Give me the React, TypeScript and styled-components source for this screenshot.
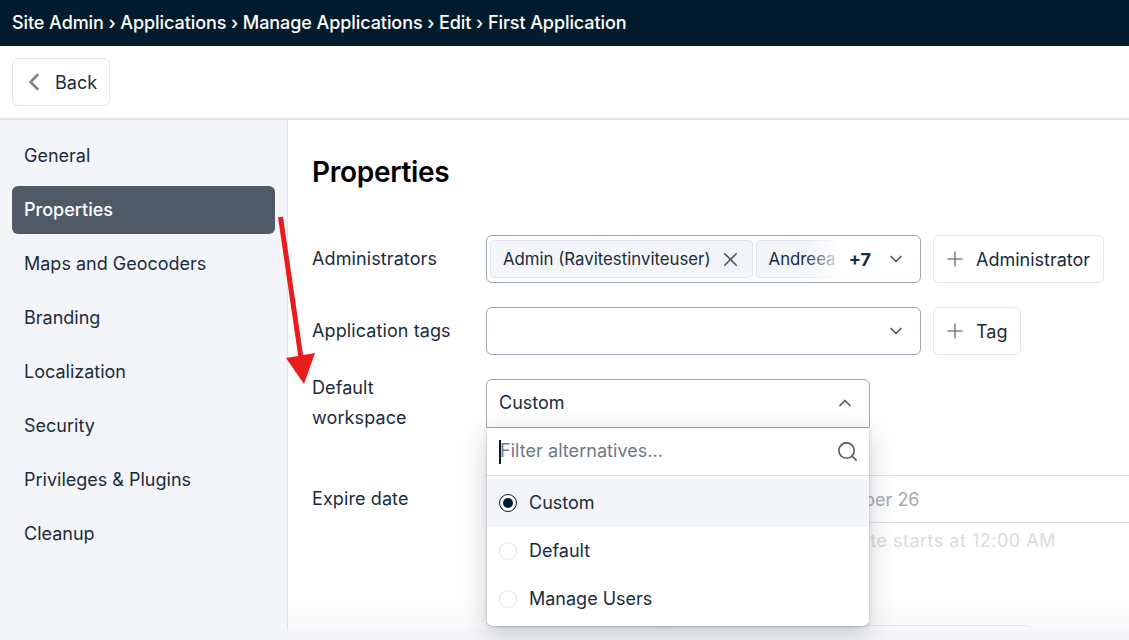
import React from "react";
import styled, { createGlobalStyle } from "styled-components";
import { ChevronLeft, ChevronDown, ChevronUp, Plus, X, Search } from "lucide-react";

const Global = createGlobalStyle`
  html, body { margin: 0; padding: 0; height: 100%; overflow: hidden; background: #fff; }
  #root { height: 100%; }
  * { box-sizing: border-box; }
`;

const Page = styled.div`
  position: relative;
  width: 1129px;
  height: 640px;
  overflow: hidden;
  display: flex;
  flex-direction: column;
  font-family: Inter, "Liberation Sans", sans-serif;
  font-size: 18px;
  color: #1a2b3c;
  background: #fff;
`;

const Crumbs = styled.header`
  height: 46px;
  flex: none;
  background: #031c2d;
  color: #fff;
  display: flex;
  align-items: center;
  padding: 0 12px 1px;
  font-weight: 500;
  font-size: 18px;
  letter-spacing: -0.08px;
`;

const Toolbar = styled.div`
  height: 74px;
  flex: none;
  padding: 12px;
  border-bottom: 2px solid #e1e4ef;
`;

const OutlineButton = styled.button`
  height: 48px;
  display: inline-flex;
  align-items: center;
  background: #fff;
  border: 1px solid #e4e6ec;
  border-radius: 6px;
  font: inherit;
  color: inherit;
  flex: none;
  svg { color: #7b858f; flex: none; }
`;

const BackButton = styled(OutlineButton)`
  padding: 0 12px 0 7px;
  gap: 7px;
`;

const Body = styled.div`
  flex: 1;
  min-height: 0;
  display: flex;
`;

const Sidebar = styled.nav`
  width: 288px;
  flex: none;
  background: #f4f5f8;
  border-right: 1px solid #e1e4ef;
  padding: 12px 12px 0;
  display: flex;
  flex-direction: column;
  gap: 6px;
`;

const NavItem = styled.div<{ $active?: boolean }>`
  height: 48px;
  width: 263px;
  flex: none;
  display: flex;
  align-items: center;
  padding: 0 12px 2px;
  border-radius: 6px;
  background: ${(p) => (p.$active ? "#4f5a68" : "transparent")};
  color: ${(p) => (p.$active ? "#fff" : "#1a2b3c")};
  font-weight: ${(p) => (p.$active ? 500 : 400)};
`;

const Main = styled.main`
  flex: 1;
  min-width: 0;
  padding: 0 0 0 24px;
`;

const Title = styled.h1`
  margin: 0;
  padding-top: 35px;
  height: 115px;
  font-size: 28px;
  line-height: 34px;
  font-weight: 600;
  letter-spacing: -0.3px;
  color: #000;
`;

const Row = styled.div<{ $gapBelow?: number }>`
  display: flex;
  align-items: center;
  height: 48px;
  margin-bottom: ${(p) => p.$gapBelow ?? 24}px;
`;

const Label = styled.div`
  width: 174px;
  flex: none;
  line-height: 30px;
  letter-spacing: 0.1px;
`;

const Field = styled.div`
  width: 435px;
  height: 48px;
  flex: none;
  display: flex;
  align-items: center;
  border: 1px solid #a0a8b5;
  border-radius: 6px;
  background: #fff;
  padding: 0 14px 0 3px;
  overflow: hidden;
  svg { color: #4f5a68; flex: none; }
`;

const Chips = styled.div`
  position: relative;
  flex: 1;
  min-width: 0;
  height: 38px;
  display: flex;
  gap: 3px;
  overflow: hidden;
`;

const Chip = styled.div`
  flex: none;
  height: 38px;
  display: flex;
  align-items: center;
  padding: 0 10px 0 12px;
  gap: 8px;
  background: #f4f5f8;
  border: 1px solid #e1e4ef;
  border-radius: 4px;
  white-space: nowrap;
  font-size: 16.8px;
  svg { color: #4f5a68; }
`;

const Fade = styled.div`
  position: absolute;
  right: 0;
  top: 0;
  bottom: 0;
  width: 42px;
  background: linear-gradient(to right, rgba(255, 255, 255, 0), #fff 90%);
`;

const More = styled.span`
  font-weight: 700;
  flex: none;
  color: #1a2b3c;
  margin: 0 15px 0 2px;
`;

const Spacer = styled.div`
  flex: 1;
`;

const AddButton = styled(OutlineButton)`
  margin-left: 12px;
  padding: 0 13px 0 9px;
  gap: 9px;
`;

const Select = styled.div`
  position: relative;
  width: 384px;
  height: 48px;
  flex: none;
`;

const SelectHead = styled.div`
  height: 49px;
  display: flex;
  align-items: center;
  justify-content: space-between;
  padding: 0 14px 2px 12px;
  border: 1px solid #a0a8b5;
  border-radius: 6px 6px 0 0;
  background: #fff;
  svg { color: #4f5a68; }
`;

const Menu = styled.div`
  position: absolute;
  z-index: 3;
  top: 49px;
  left: 1px;
  width: 382px;
  height: 198px;
  background: #fff;
  border-radius: 0 0 6px 6px;
  box-shadow: 0 1px 3px rgba(60, 70, 85, 0.35), 0 8px 28px rgba(30, 40, 55, 0.22);
`;

const FilterRow = styled.div`
  height: 48px;
  display: flex;
  align-items: center;
  justify-content: space-between;
  padding: 0 10px 0 12px;
  border-bottom: 1px solid #e1e4ef;
  svg { color: #4f5a68; flex: none; }
`;

const Filter = styled.span`
  border-left: 2px solid #031c2d;
  color: #6f7883;
  height: 24px;
  line-height: 21px;
  letter-spacing: 0.05px;
  text-indent: -1px;
`;

const Options = styled.div`
  padding-top: 3px;
`;

const Option = styled.div<{ $selected?: boolean }>`
  height: 48px;
  display: flex;
  align-items: center;
  gap: 12px;
  padding: 0 12px;
  background: ${(p) => (p.$selected ? "#f4f5f8" : "#fff")};
`;

const OptionText = styled.span`
  margin-top: -2px;
`;

const Radio = styled.span<{ $on?: boolean }>`
  width: 18px;
  height: 18px;
  flex: none;
  border-radius: 50%;
  background: #fff;
  border: ${(p) => (p.$on ? "1.5px solid #031c2d" : "1px solid #e1e4ef")};
  display: flex;
  align-items: center;
  justify-content: center;
  &::after {
    content: "";
    display: ${(p) => (p.$on ? "block" : "none")};
    width: 10px;
    height: 10px;
    border-radius: 50%;
    background: #031c2d;
  }
`;

const DateColumn = styled.div`
  width: 700px;
  flex: none;
`;

const DateInput = styled.div`
  height: 48px;
  border-top: 1px solid #dfe1e8;
  border-bottom: 1px solid #dfe1e8;
  display: flex;
  align-items: center;
  padding-left: 313px;
  color: #a5abb3;
`;

const Hint = styled.div`
  padding: 6px 0 0 283px;
  color: #d9dbde;
  line-height: 24px;
  white-space: nowrap;
  letter-spacing: 0.5px;
`;

const DateRow = styled.div`
  display: flex;
  align-items: flex-start;
  height: 48px;
  margin-top: 48px;
`;

const DateLabel = styled(Label)`
  padding-top: 9px;
`;

const Peek = styled.div`
  position: absolute;
  left: 662px;
  top: 625px;
  width: 371px;
  height: 30px;
  border: 1px solid #d5d8df;
  border-radius: 6px;
  background: #fff;
  z-index: 1;
`;

const BottomFade = styled.div`
  position: absolute;
  left: 288px;
  right: 0;
  top: 600px;
  height: 30px;
  background: linear-gradient(to bottom, rgba(244, 245, 248, 0), rgba(244, 245, 248, 0.65));
  z-index: 1;
`;

const BottomBar = styled.div`
  position: absolute;
  left: 0;
  right: 0;
  top: 630px;
  height: 10px;
  background: #f4f5f8;
  z-index: 2;
`;

const Arrow = styled.svg`
  position: absolute;
  left: 270px;
  top: 210px;
  z-index: 4;
`;

const nav = ["General", "Properties", "Maps and Geocoders", "Branding", "Localization", "Security", "Privileges & Plugins", "Cleanup"];

export default function App() {
  return (
    <Page>
      <Global />
      <Crumbs>Site Admin › Applications › Manage Applications › Edit › First Application</Crumbs>
      <Toolbar>
        <BackButton>
          <ChevronLeft size={28} strokeWidth={2.2} />
          Back
        </BackButton>
      </Toolbar>
      <Body>
        <Sidebar>
          {nav.map((n) => (
            <NavItem key={n} $active={n === "Properties"}>{n}</NavItem>
          ))}
        </Sidebar>
        <Main>
          <Title>Properties</Title>
          <Row>
            <Label>Administrators</Label>
            <Field>
              <Chips>
                <Chip>
                  Admin (Ravitestinviteuser)
                  <X size={23} strokeWidth={1.8} />
                </Chip>
                <Chip>Andreea (</Chip>
                <Fade />
              </Chips>
              <More>+7</More>
              <ChevronDown size={20} strokeWidth={2} />
            </Field>
            <AddButton>
              <Plus size={24} strokeWidth={1.6} />
              Administrator
            </AddButton>
          </Row>
          <Row>
            <Label>Application tags</Label>
            <Field>
              <Spacer />
              <ChevronDown size={20} strokeWidth={2} />
            </Field>
            <AddButton>
              <Plus size={24} strokeWidth={1.6} />
              Tag
            </AddButton>
          </Row>
          <Row $gapBelow={0}>
            <Label>Default<br />workspace</Label>
            <Select>
              <SelectHead>
                Custom
                <ChevronUp size={20} strokeWidth={2} />
              </SelectHead>
              <Menu>
                <FilterRow>
                  <Filter>Filter alternatives...</Filter>
                  <Search size={23} strokeWidth={1.7} />
                </FilterRow>
                <Options>
                  <Option $selected><Radio $on /><OptionText>Custom</OptionText></Option>
                  <Option><Radio /><OptionText>Default</OptionText></Option>
                  <Option><Radio /><OptionText>Manage Users</OptionText></Option>
                </Options>
              </Menu>
            </Select>
          </Row>
          <DateRow>
            <DateLabel>Expire date</DateLabel>
            <DateColumn>
              <DateInput>September 26</DateInput>
              <Hint>The end date starts at 12:00 AM</Hint>
            </DateColumn>
          </DateRow>
        </Main>
      </Body>
      <Peek />
      <BottomFade />
      <BottomBar />
      <Arrow width="60" height="180" viewBox="270 210 60 180">
        <line x1="280.5" y1="217" x2="301" y2="358" stroke="#e81c1c" strokeWidth="5" />
        <polygon points="286,358 315,353 304,384" fill="#e81c1c" />
      </Arrow>
    </Page>
  );
}
